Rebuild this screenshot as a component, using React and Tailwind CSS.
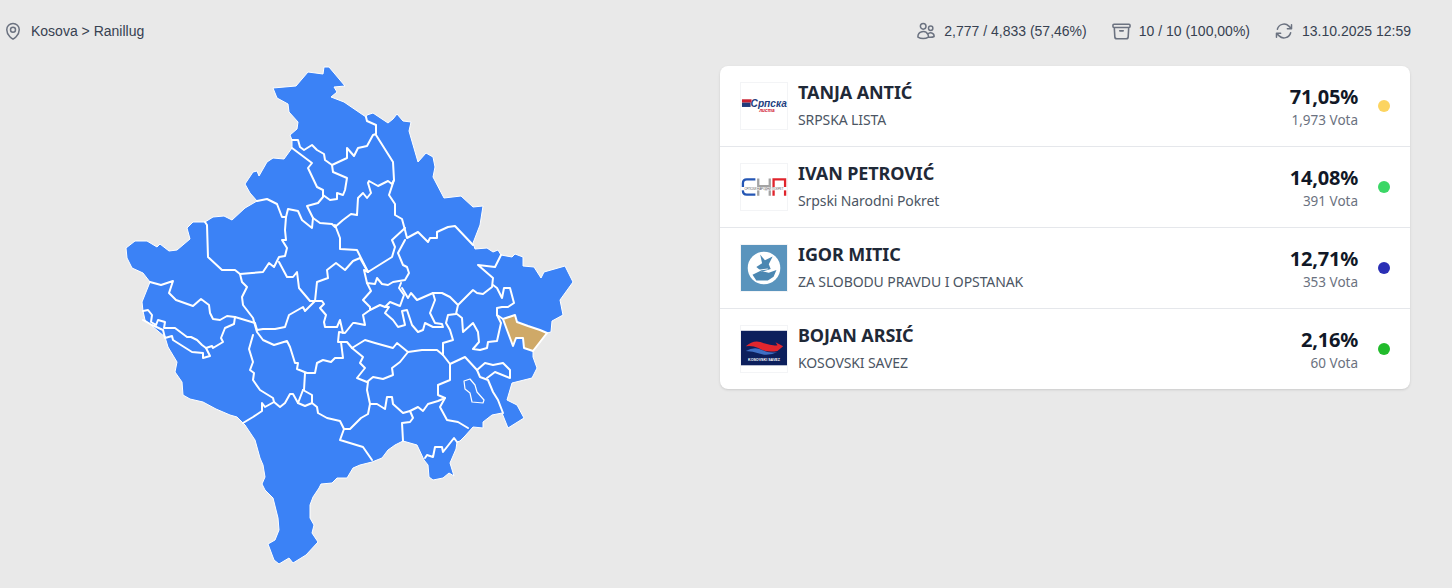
import React from 'react';
import { HiOutlineMapPin, HiOutlineUsers, HiOutlineArchiveBox, HiOutlineArrowPath } from 'react-icons/hi2';

const OUTLINE = `273,88 296,86 308,72 323,74 324,67 329,67 345,86 334,87 337,92 331,97 344,102 366,117 367,115 373,113 388,123 393,119 397,114 403,121 411,122 409,131 418,162 426,153 433,157 435,167 433,177 444,198 461,196 473,207 483,206 480,225 473,243 475,249 487,248 493,252 498,250 501,255 512,257 515,254 523,257 523,266 534,267 541,278 544,272 565,266 573,282 560,300 563,315 552,321 551,332 547,333 533,351 533,357 537,368 532,378 512,383 507,400 517,405 524,418 508,428 502,413 492,415 483,422 483,428 473,427 465,436 460,441 457,442 456,449 450,463 454,476 449,473 443,478 433,480 429,477 428,465 424,460 417,445 403,441 395,445 388,450 382,458 372,462 360,465 353,468 347,478 337,478 332,483 321,484 319,488 313,497 310,505 310,518 314,525 312,533 318,542 306,555 293,563 289,558 279,564 274,560 268,544 275,540 279,530 278,518 273,498 265,490 262,484 265,477 263,465 260,458 255,440 245,425 237,417 230,415 216,409 203,402 190,399 183,395 182,382 175,372 177,362 168,347 165,337 145,320 143,311 142,302 150,282 143,273 132,268 127,258 126,248 135,241 147,241 157,247 160,244 169,251 177,250 190,239 187,228 193,222 205,222 213,217 224,216 232,220 245,208 257,201 250,193 245,184 253,172 257,171 259,176 267,162 273,158 284,159 292,148 292,140 290,135 297,129 298,122 289,112 288,104 277,98`;

const RANILUG = '503,319 515,315 517,322 528,326 540,330 547,333 540,342 533,351 524,348 523,338 516,338 513,346 510,338 507,330';

const LAKE = '464,381 470,379 475,385 477,392 484,400 483,403 472,402 470,393 465,389';

const BORDERS = [
  '292,140 298,140 300,147 304,150 312,145 317,150 324,154 325,160 332,165 333,172 347,178 345,190 343,195 337,193 337,199 330,200 323,195',
  '292,148 312,163 308,168 317,187 323,190 323,197 318,203 307,206 313,218 320,223 332,224 335,227 343,220 351,214 357,215 358,198 363,193 367,198 371,193 368,183 369,181 378,186 388,181 392,184 394,180',
  '332,165 347,158 347,148 354,156 358,148 367,146 373,135 376,134 376,125 367,121 366,117',
  '376,135 393,162 394,180 389,195 395,204 395,215 402,219 405,230 407,238 418,232 428,242 430,238 437,238 437,232 448,227 455,226 473,245',
  '257,201 267,199 277,204 282,217 286,217 288,209 298,211 302,220 312,228 313,218',
  '286,217 285,230 286,240 282,240 287,248 285,256 279,257 274,267 269,263 263,272 252,273 240,274 235,270 222,270 208,257 207,225 205,222',
  '240,274 242,282 247,287 242,297 243,305 253,318 257,332 263,340 274,345 287,341 290,347 295,363 298,363 297,369 307,373 315,373 317,363 323,360 331,362 335,358 343,358 341,342 338,342 339,332 345,333 353,323 355,323 365,325 363,315 370,310 370,307 363,300 371,291 367,283',
  '279,262 287,277 293,277 297,272 299,288 310,301 315,301 317,282 328,278 327,270 336,263 345,270 353,261 360,258 368,272',
  '335,225 340,238 340,249 357,250 368,272 392,257 395,247 392,240 405,228',
  '150,282 161,285 173,281 169,293 176,300 193,306 201,299 209,305 210,313 213,319 220,320 227,316 235,317 255,323 257,330 263,329 275,329 285,327 289,315 303,307 305,311 315,301 322,301 324,304 320,308 326,315 324,322 325,327 337,327 340,320 343,333',
  '235,317 234,324 225,328 221,338 223,342 213,348 212,346 206,348 210,356 203,358 203,353 192,352 173,340 172,336 165,338 163,330 152,325 143,320',
  '143,311 148,310 152,315 151,322 156,325 158,320 165,322 164,328 175,328 187,337 191,337 197,340 202,345 206,348',
  '253,335 249,349 253,362 250,370 254,373 253,380 260,390 273,398 274,402 265,407 262,403 262,411 253,417 243,423',
  '305,373 304,390 303,390 298,403 293,394 290,394 285,403 280,407 274,402',
  '303,390 312,395 312,403 305,406 298,403',
  '312,403 317,407 318,413 327,418 340,421 344,429 350,429 361,418 368,414 370,404 367,390 368,382',
  '344,429 340,440 363,447 372,460',
  '370,404 377,404 385,409 387,397 392,397 393,404 403,413 410,411 413,418 410,422 402,423 403,441',
  '410,411 418,407 423,411 428,404 438,401 445,398 438,395 438,385 450,380 450,364 443,355 443,343 453,340 450,330 446,323 448,315 456,314 458,305 473,290 477,293 483,294 492,287 493,278 478,265 495,267 501,255',
  '445,398 440,407 447,420 458,422 468,428',
  '425,458 427,455 433,457 435,447 442,447 443,452 454,438 457,442',
  '368,272 364,270 367,283 375,284 377,278 382,284 388,285 393,282 405,280 409,273 407,267 403,265 398,253 405,240',
  '370,310 380,305 385,307 390,302 400,306 404,295 399,288 401,283',
  '402,288 408,298 411,293 417,300 433,293 442,293 450,297 458,305',
  '433,293 435,300 430,313 435,323 442,324 443,327 433,327 425,323 423,330 418,332 412,325 407,310 402,311 405,325 398,327 393,320 385,313 389,307 385,307',
  '340,342 347,342 352,348 365,340 375,343 393,348 397,343 408,352 422,350 437,350 443,355',
  '408,352 400,362 392,368 393,375 383,379 373,377 367,382 357,378 365,368 360,363 363,357 352,348',
  '450,364 465,357 477,370 480,377 488,380 493,392 498,400 503,413',
  '477,370 485,363 493,365 503,363 510,370 510,378 495,372 487,378',
  '457,314 462,318 463,332 473,323 478,332 479,342 473,349 480,350 487,348 488,342 497,341 501,323 497,315 497,308 502,307 508,307 514,303 510,288 504,288 502,298 497,288 493,285',
  '497,315 503,319',
];

function KosovoMap() {
  return (
    <svg viewBox="0 62 720 526" className="block w-[720px] h-[526px] shrink-0">
      <polygon points={OUTLINE} className="fill-[#3b82f6] stroke-white" strokeWidth="1" strokeLinejoin="round" />
      {BORDERS.map((points, idx) => (
        <polyline key={idx} points={points} fill="none" className="stroke-white" strokeWidth="2" strokeLinejoin="round" strokeLinecap="round" />
      ))}
      <polygon points={LAKE} className="fill-[#3b82f6] stroke-white" strokeWidth="1.2" strokeLinejoin="round" />
      <polygon points={RANILUG} className="fill-[#cfa968] stroke-white" strokeWidth="2" strokeLinejoin="round" />
    </svg>
  );
}

function SrpskaLogo() {
  return (
    <svg viewBox="0 0 48 48" className="w-full h-full">
      <rect x="1" y="17" width="10" height="3.5" fill="#c8202f" />
      <rect x="1" y="20.5" width="9" height="4.5" fill="#1f3a7a" />
      <text x="10" y="25" fontSize="10.6" fontWeight="700" fontStyle="italic" fill="#1f3f7f" fontFamily="'Liberation Sans', sans-serif">Српска</text>
      <text x="27" y="30" fontSize="5" fontWeight="700" fontStyle="italic" fill="#d0202f" textAnchor="middle" fontFamily="'Liberation Sans', sans-serif">листа</text>
    </svg>
  );
}

function SnpLogo() {
  return (
    <svg viewBox="0 0 48 48" className="w-full h-full" fill="none" strokeWidth="2.4">
      <path d="M15 16 H6 Q2 16 2 20 V28 Q2 32 6 32 H15" stroke="#2456b4" />
      <path d="M18 15 V33 M30 15 V33 M18 23 H30" stroke="#a3a3a3" />
      <path d="M34 33 V16 H46 V33" stroke="#e0242c" />
      <rect x="0" y="24" width="48" height="3.5" fill="#fff" stroke="none" />
      <text x="24" y="27" fontSize="3" fill="#555" textAnchor="middle" stroke="none" fontFamily="'Liberation Sans', sans-serif">СРПСКИ НАРОДНИ ПОКРЕТ</text>
    </svg>
  );
}

function SlobodaLogo() {
  return (
    <svg viewBox="0 0 48 48" className="w-full h-full">
      <rect x="0" y="0" width="48" height="48" fill="#5a94bd" />
      <circle cx="24" cy="24" r="17" fill="#fff" />
      <path d="M20 10 L25 16 L33 12 L29 20 L31 25 L22 28 L16 23 L22 19 Z" fill="#4b87b2" />
      <path d="M12 31 L20 27 L29 29 L37 26 L34 33 L28 37 L16 37 Z" fill="#4b87b2" />
      <path d="M13 27 L28 25" stroke="#fff" strokeWidth="1" />
    </svg>
  );
}

function SavezLogo() {
  return (
    <svg viewBox="0 0 48 48" className="w-full h-full">
      <rect x="0" y="5" width="48" height="36" fill="#0c1f5c" />
      <path d="M5 21 Q14 13 24 18 Q33 21 38 20 L36 17 L44 21 L38 26 Q26 28 18 23 Q12 20 5 21 Z" fill="#e0262e" />
      <path d="M5 26 Q14 21 22 25 Q30 29 38 27 Q28 32 20 29 Q12 26 5 26 Z" fill="#3f6fc4" />
      <text x="24" y="36.5" fontSize="3.8" fontWeight="700" fill="#fff" textAnchor="middle" fontFamily="'Liberation Sans', sans-serif">KOSOVSKI SAVEZ</text>
    </svg>
  );
}

const CANDIDATES = [
  { name: 'TANJA ANTIĆ', party: 'SRPSKA LISTA', pct: '71,05%', votes: '1,973 Vota', dot: 'bg-[#fcd460]', Logo: SrpskaLogo },
  { name: 'IVAN PETROVIĆ', party: 'Srpski Narodni Pokret', pct: '14,08%', votes: '391 Vota', dot: 'bg-[#3bd766]', Logo: SnpLogo },
  { name: 'IGOR MITIC', party: 'ZA SLOBODU PRAVDU I OPSTANAK', pct: '12,71%', votes: '353 Vota', dot: 'bg-[#2a2fb5]', Logo: SlobodaLogo },
  { name: 'BOJAN ARSIĆ', party: 'KOSOVSKI SAVEZ', pct: '2,16%', votes: '60 Vota', dot: 'bg-[#22bb2c]', Logo: SavezLogo },
];

function CandidateRow({ candidate, last }) {
  const { name, party, pct, votes, dot, Logo } = candidate;
  return (
    <div className={`flex items-center px-5 ${last ? 'h-[80px]' : 'h-[81px] border-b border-[#e5e7eb]'}`}>
      <div className="w-12 h-12 shrink-0 border border-[#f3f4f6] bg-white overflow-hidden">
        <Logo />
      </div>
      <div className="ml-[10px] flex-1">
        <div className="text-lg leading-7 font-bold text-[#1f2937] -mt-1 tracking-[-0.1px]">{name}</div>
        <div className="text-sm leading-5 text-[#4b5563] mt-1 tracking-[-0.1px]">{party}</div>
      </div>
      <div className="text-right mr-5">
        <div className="text-xl leading-7 font-bold text-[#111827] tracking-[-0.2px]">{pct}</div>
        <div className="text-[13.5px] leading-5 text-[#6b7280] -mt-[1px]">{votes}</div>
      </div>
      <div className={`w-3 h-3 rounded-full ${dot}`} />
    </div>
  );
}

export default function App() {
  return (
    <div className="w-[1452px] h-[588px] overflow-hidden bg-[#e9e9e9]">
      <div className="h-[62px] flex items-center justify-between pl-[3px] pr-[41px] text-sm text-[#374151] font-['Liberation_Sans',sans-serif]">
        <div className="flex items-center gap-2">
          <HiOutlineMapPin className="w-5 h-5 text-[#6b7280]" strokeWidth={1.8} />
          <span>Kosova &gt; Ranillug</span>
        </div>
        <div className="flex items-center gap-6">
          <div className="flex items-center gap-2">
            <HiOutlineUsers className="w-5 h-5 text-[#6b7280]" strokeWidth={1.8} />
            <span>2,777 / 4,833 (57,46%)</span>
          </div>
          <div className="flex items-center gap-[7px]">
            <HiOutlineArchiveBox className="w-[21px] h-[21px] text-[#6b7280]" strokeWidth={1.8} />
            <span>10 / 10 (100,00%)</span>
          </div>
          <div className="flex items-center gap-2">
            <HiOutlineArrowPath className="w-5 h-5 text-[#6b7280]" strokeWidth={1.8} />
            <span>13.10.2025 12:59</span>
          </div>
        </div>
      </div>

      <div className="flex items-start">
        <KosovoMap />
        <div className="w-[690px] mt-1 bg-white rounded-lg shadow-sm font-['Noto_Sans',sans-serif]">
          {CANDIDATES.map((c, idx) => (
            <CandidateRow key={c.name} candidate={c} last={idx === CANDIDATES.length - 1} />
          ))}
        </div>
      </div>
    </div>
  );
}
